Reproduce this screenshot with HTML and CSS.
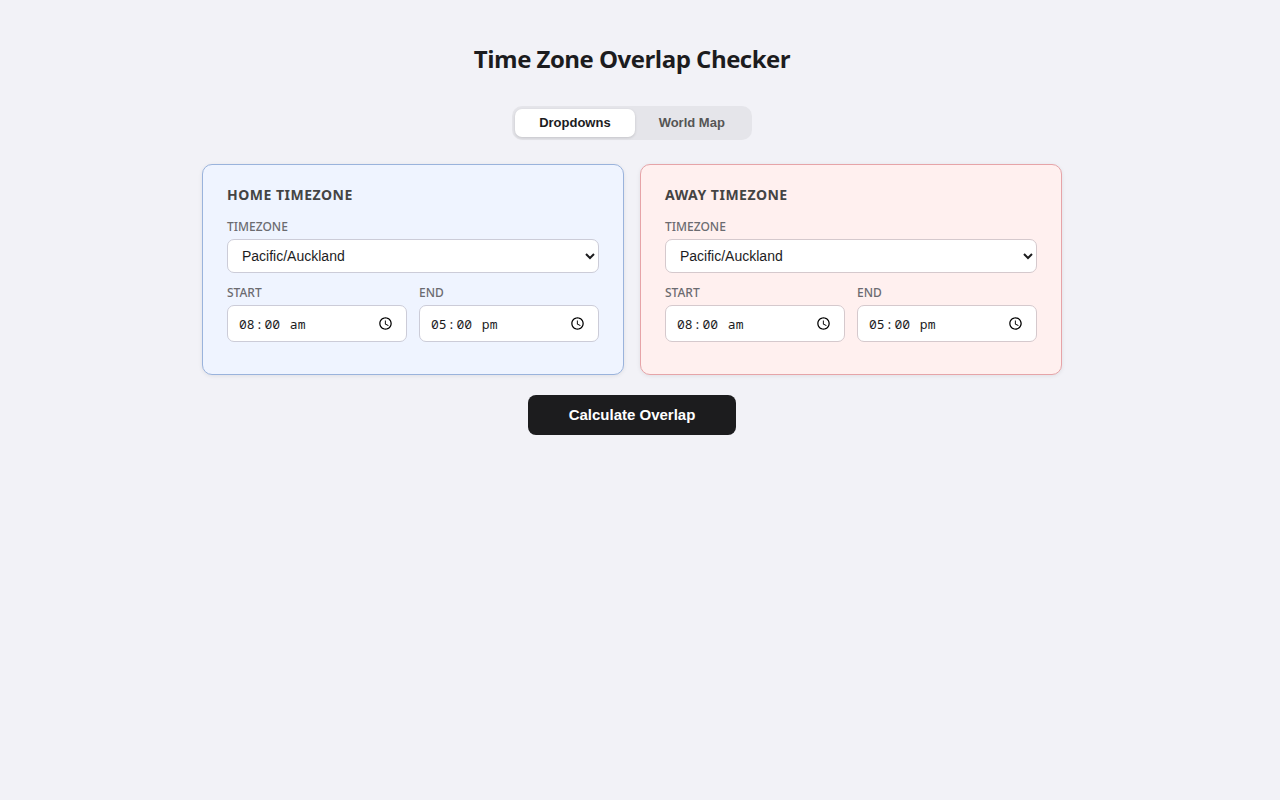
FILE: index.html
```html
<!DOCTYPE html>
<html lang="en-NZ">
<head>
    <meta charset="UTF-8">
    <meta name="viewport" content="width=device-width, initial-scale=1.0">
    <title>Time Zone Overlap Checker</title>
    <link rel="stylesheet" href="styles.css">
</head>
<body>
    <main class="container">
        <h1>Time Zone Overlap Checker</h1>

        <div class="tabs">
            <button type="button" class="tab active" data-view="dropdowns">Dropdowns</button>
            <button type="button" class="tab" data-view="map">World Map</button>
        </div>

        <form id="overlap-form">
            <div class="panels">
                <section class="panel home">
                    <h2>Home Timezone</h2>
                    <label for="home-tz">Timezone</label>
                    <select id="home-tz">
                        <option>Pacific/Auckland</option>
                    </select>
                    <div class="time-row">
                        <div class="time-field">
                            <label for="home-start">Start</label>
                            <input type="time" id="home-start" value="08:00">
                        </div>
                        <div class="time-field">
                            <label for="home-end">End</label>
                            <input type="time" id="home-end" value="17:00">
                        </div>
                    </div>
                </section>

                <section class="panel away">
                    <h2>Away Timezone</h2>
                    <label for="away-tz">Timezone</label>
                    <select id="away-tz">
                        <option>Pacific/Auckland</option>
                    </select>
                    <div class="time-row">
                        <div class="time-field">
                            <label for="away-start">Start</label>
                            <input type="time" id="away-start" value="08:00">
                        </div>
                        <div class="time-field">
                            <label for="away-end">End</label>
                            <input type="time" id="away-end" value="17:00">
                        </div>
                    </div>
                </section>
            </div>

            <button type="submit" class="calculate">Calculate Overlap</button>
        </form>
    </main>
</body>
</html>
```
FILE: styles.css
```css
* {
    box-sizing: border-box;
}

body {
    margin: 0;
    padding: 40px 36px 40px 20px;
    font-family: "Noto Sans", sans-serif;
    background: #f2f2f7;
    color: #1c1c1e;
}

.container {
    max-width: 860px;
    margin: 0 auto;
}

h1 {
    margin: 0 0 28px;
    font-family: "Open Sans", "Noto Sans", sans-serif;
    font-size: 24px;
    font-weight: 700;
    line-height: 38px;
    letter-spacing: -0.5px;
    text-align: center;
}

/* view switch */
.tabs {
    display: flex;
    width: fit-content;
    margin: 0 auto 24px;
    padding: 3px;
    background: #e5e5ea;
    border-radius: 10px;
}

.tab {
    padding: 6px 24px;
    border: none;
    border-radius: 7px;
    background: transparent;
    color: #555;
    font-family: "Liberation Sans", Arial, sans-serif;
    font-size: 13px;
    font-weight: 600;
    line-height: 16px;
    cursor: pointer;
}

.tab.active {
    background: #fff;
    color: #1c1c1e;
    box-shadow: 0 1px 3px rgba(0, 0, 0, 0.15);
}

/* home and away cards */
.panels {
    display: grid;
    grid-template-columns: 1fr 1fr;
    gap: 16px;
    margin-bottom: 20px;
}

.panel {
    padding: 20px 24px;
    border: 1px solid;
    border-radius: 10px;
    box-shadow: 0 1px 4px rgba(0, 0, 0, 0.08);
}

.home {
    background: #eff4ff;
    border-color: #9ab3dc;
}

.away {
    background: #fff0ef;
    border-color: #e6a4a8;
}

h2 {
    margin: 0 0 14px;
    color: #444;
    font-size: 14px;
    font-weight: 700;
    line-height: 20px;
    letter-spacing: 0.5px;
    text-transform: uppercase;
}

label {
    display: block;
    margin-bottom: 4px;
    color: #6b6b70;
    font-size: 12px;
    font-weight: 500;
    line-height: 16px;
    text-transform: uppercase;
}

select,
input {
    display: block;
    width: 100%;
    margin-bottom: 12px;
    border: 1px solid #ccccd8;
    border-radius: 7px;
    background: #fff;
    color: #1c1c1e;
}

.away select,
.away input {
    border-color: #d5c9cd;
}

select {
    height: 34px;
    padding: 7px 10px 8px;
    font-family: "Liberation Sans", Arial, sans-serif;
    font-size: 14px;
}

input {
    height: 37px;
    padding: 8px 10px;
    font-family: "Noto Sans Mono", "Liberation Mono", monospace;
    font-size: 13px;
}

input::-webkit-datetime-edit-ampm-field {
    text-transform: lowercase;
}

input::-webkit-calendar-picker-indicator {
    width: 15px;
    height: 15px;
}

.time-row {
    display: flex;
    gap: 12px;
}

.time-field {
    flex: 1;
}

.calculate {
    display: block;
    margin: 0 auto;
    padding: 11px 41px;
    border: none;
    border-radius: 8px;
    background: #1c1c1e;
    color: #fff;
    font-family: "Liberation Sans", Arial, sans-serif;
    font-size: 15px;
    font-weight: 600;
    line-height: 18px;
    cursor: pointer;
}
```
